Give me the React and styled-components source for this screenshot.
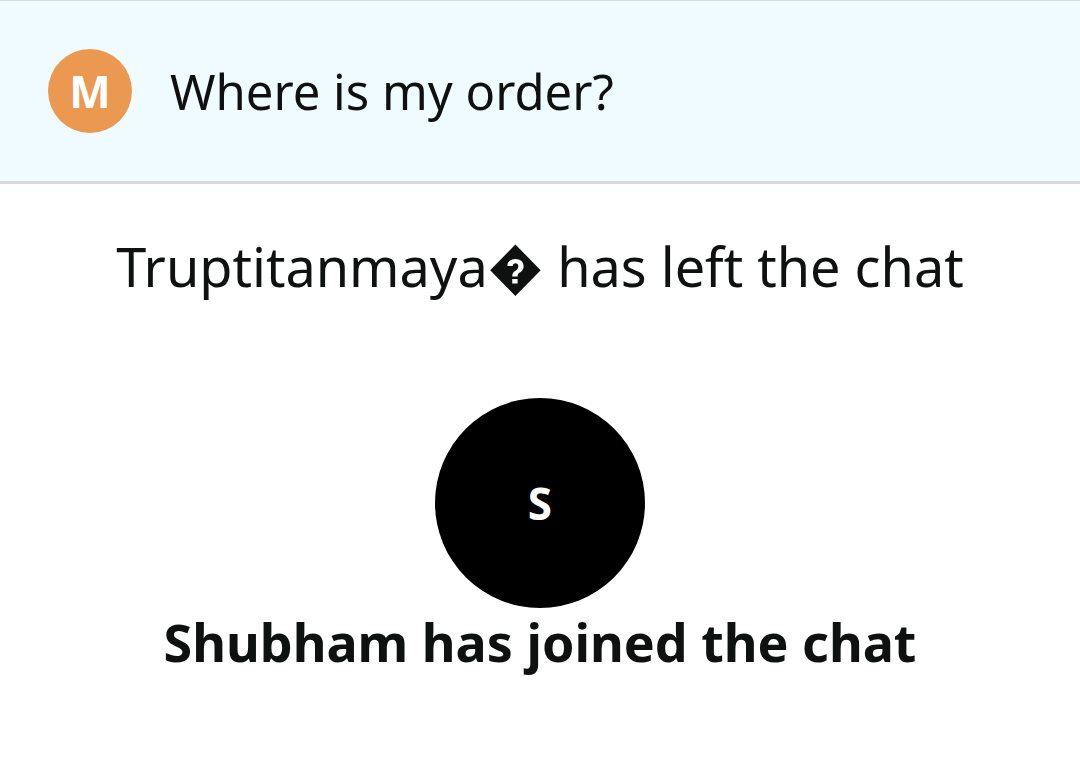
import React from 'react';
import styled, { createGlobalStyle } from 'styled-components';

export default function App() {

    return (
        <>
            <GlobalStyle />
            <Header>
                <Avatar>M</Avatar>
                <Title>Where is my order?</Title>
            </Header>
            <Chat>
                <Notice>Truptitanmaya<Replacement>{'\uFFFD'}</Replacement> has left the chat</Notice>
                <Joined>
                    <Avatar $large>S</Avatar>
                    <Notice $bold>Shubham has joined the chat</Notice>
                </Joined>
            </Chat>
        </>
    )
}

const GlobalStyle = createGlobalStyle`
    body {
        margin: 0;
        background-color: #ffffff;
        color: #0f1111;
        font-family: "Noto Sans", sans-serif;
    }
`;

const Header = styled.header`
    display: flex;
    align-items: center;
    gap: 38px;
    padding: 48px;

    background-color: #f0fbff;
    border-top: 1px solid #d5dbdb;
    border-bottom: 3px solid #d5dbdb;
`;

const Avatar = styled.div`
    display: flex;
    align-items: center;
    justify-content: center;
    flex-shrink: 0;
    width: ${({ $large }) => $large ? '210px' : '84px'};
    height: ${({ $large }) => $large ? '210px' : '84px'};

    background-color: ${({ $large }) => $large ? '#000000' : '#eb9850'};
    border-radius: 50%;
    color: #ffffff;
    font-size: 44px;
    font-weight: 700;
`;

const Title = styled.h1`
    margin: 0;

    font-size: 49px;
    font-weight: 400;
    line-height: 64px;
`;

const Chat = styled.main`
    display: flex;
    flex-direction: column;
    align-items: center;
    gap: 98px;
    padding: 48px 48px 80px;
`;

const Notice = styled.p`
    margin: 0;

    font-size: ${({ $bold }) => $bold ? '52px' : '54px'};
    font-weight: ${({ $bold }) => $bold ? 700 : 400};
    line-height: 68px;
    text-align: center;
`;

const Replacement = styled.span`
    font-family: Roboto, sans-serif;
    line-height: 1;
`;

const Joined = styled.section`
    display: flex;
    flex-direction: column;
    align-items: center;
`;
